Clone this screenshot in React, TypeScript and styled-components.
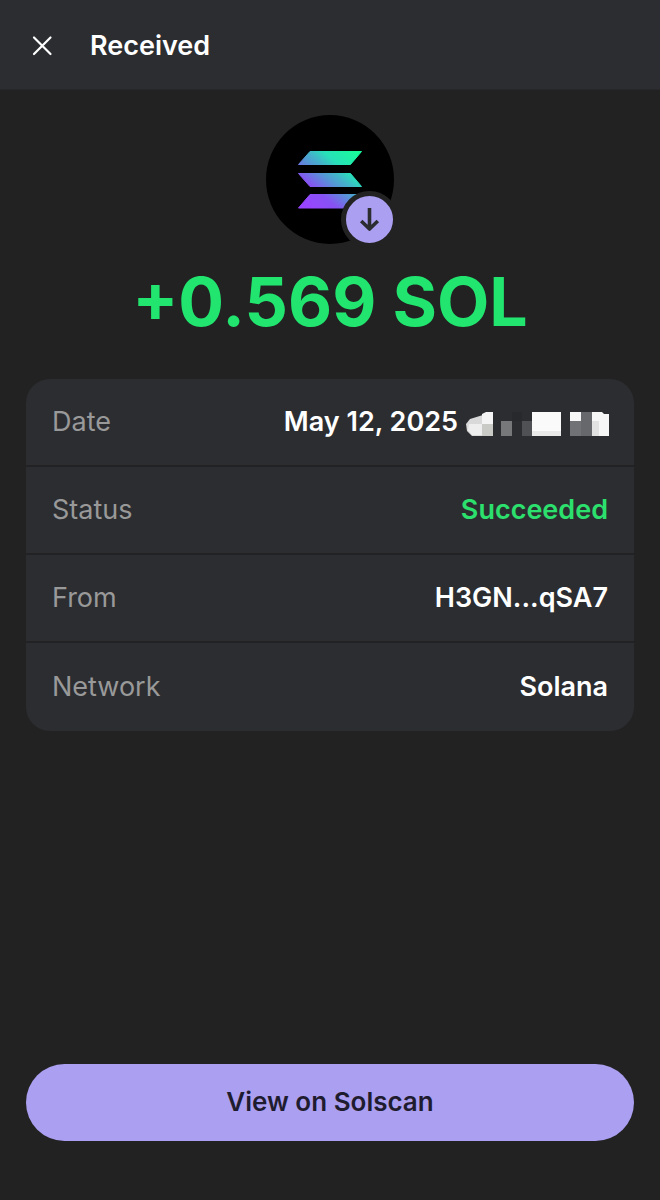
import React from "react";
import styled, { createGlobalStyle } from "styled-components";

const GlobalStyle = createGlobalStyle`
  *, *::before, *::after { box-sizing: border-box; }
  body {
    margin: 0;
    background: #222222;
    color: #ffffff;
    font-family: Inter, "Liberation Sans", sans-serif;
  }
`;

const Screen = styled.div`
  display: flex;
  flex-direction: column;
  min-height: 100vh;
`;

const Header = styled.header`
  display: flex;
  align-items: center;
  gap: 32px;
  padding: 29px 26px 26px;
  background: #2c2d31;
  border-bottom: 1px solid #28282b;
`;

const CloseButton = styled.button`
  display: flex;
  padding: 0;
  border: 0;
  background: none;
  color: #ffffff;
  cursor: pointer;
`;

const Title = styled.h1`
  margin: 0;
  font-size: 27px;
  line-height: 34px;
  font-weight: 600;
`;

const Main = styled.main`
  flex: 1;
  display: flex;
  flex-direction: column;
  align-items: center;
  padding: 25px 26px 59px;
`;

const TokenIcon = styled.div`
  position: relative;
  width: 128px;
  height: 129px;
`;

const Badge = styled.span`
  position: absolute;
  right: -4px;
  bottom: -4px;
  display: flex;
  border: 5px solid #222222;
  border-radius: 50%;
  background: #ab9ff2;
`;

const Amount = styled.p<{ $color: string }>`
  margin: 16px 0 36px;
  font-size: 68px;
  line-height: 83px;
  font-weight: 700;
  text-align: center;
  color: ${(p) => p.$color};
`;

const Details = styled.dl`
  width: 100%;
  margin: 0;
  border-radius: 24px;
  background: #2c2d31;
  overflow: hidden;
`;

const Row = styled.div`
  display: flex;
  align-items: center;
  justify-content: space-between;
  min-height: 88px;
  padding: 0 26px;
  font-size: 27px;
  line-height: 34px;

  &:not(:last-child) {
    border-bottom: 2px solid #222225;
  }
`;

const Label = styled.dt`
  color: #999999;
`;

const Value = styled.dd<{ $color?: string }>`
  display: flex;
  align-items: center;
  gap: 8px;
  margin: 0;
  font-weight: 600;
  color: ${(p) => p.$color ?? "#ffffff"};
`;

const ActionButton = styled.button`
  width: 100%;
  margin-top: auto;
  padding: 20px 26px 22px;
  border: 0;
  border-radius: 39px;
  background: #ab9ff2;
  color: #1f1c30;
  font-family: inherit;
  font-size: 26px;
  line-height: 35px;
  font-weight: 600;
  cursor: pointer;
`;

const MaskedBlock = styled.svg`
  display: block;
  overflow: visible;
`;

const CloseIcon = () => (
  <svg width="32" height="32" viewBox="0 0 32 32" fill="none" aria-hidden="true">
    <path d="M8 7.500L24.500 24M24.500 7.500L8 24" stroke="currentColor" strokeWidth="2.2" strokeLinecap="round" />
  </svg>
);

const SolanaLogo = () => (
  <svg width="128" height="129" viewBox="0 0 128 129" role="img" aria-label="Solana">
    <defs>
      <linearGradient id="sol" gradientUnits="userSpaceOnUse" x1="38" y1="97" x2="90" y2="34">
        <stop offset="0.08" stopColor="#9945ff" />
        <stop offset="0.3" stopColor="#8752f3" />
        <stop offset="0.5" stopColor="#5497d5" />
        <stop offset="0.6" stopColor="#43b4ca" />
        <stop offset="0.72" stopColor="#28e0b9" />
        <stop offset="0.97" stopColor="#19fb9b" />
      </linearGradient>
    </defs>
    <ellipse cx="64" cy="64.500" rx="64" ry="64.500" fill="#000000" />
    <g fill="url(#sol)" stroke="url(#sol)" strokeWidth="1" strokeLinejoin="round">
      <path d="M44 36.500H95.500L84.500 49.500H32.500Z" />
      <path d="M32.500 58.500H84.500L95.500 71.500H44Z" />
      <path d="M44 79.500H95.500L84.500 93H32.500Z" />
    </g>
  </svg>
);

const ArrowDownIcon = () => (
  <svg width="47" height="47" viewBox="0 0 47 47" fill="none" aria-hidden="true">
    <path d="M23.500 12V33M15.200 25L23.500 33L31.800 25" stroke="#2c2d31" strokeWidth="3.6" strokeLinejoin="round" />
  </svg>
);

const HiddenTime = () => (
  <MaskedBlock width="142" height="30" viewBox="0 -4 142 30" role="img" aria-label="Time hidden">
    <path d="M0 13L4 8L17 4V25H6L1 20Z" fill="#d9d9d9" />
    <path d="M3 13H16V24H6L2 19Z" fill="#eeeeee" />
    <path d="M16 3L20 1H27V14H16Z" fill="#f4f4f4" />
    <path d="M16 13H27V25H16Z" fill="#c9c9c6" />
    <rect x="35" y="10" width="11" height="15" fill="#77787a" />
    <rect x="46" y="1" width="10" height="9" fill="#28292d" />
    <rect x="56" y="10" width="10" height="15" fill="#505154" />
    <rect x="66" y="1" width="29" height="24" fill="#fafafa" />
    <rect x="66" y="20" width="29" height="5" fill="#e9e9e9" />
    <rect x="104" y="1" width="11" height="10" fill="#f7f7f7" />
    <rect x="104" y="10" width="11" height="15" fill="#717275" />
    <rect x="115" y="1" width="11" height="24" fill="#67686b" />
    <path d="M126 1H136L138 3H143V25H126Z" fill="#f6f6f6" />
    <rect x="126" y="10" width="7" height="15" fill="#e2e2e2" />
  </MaskedBlock>
);

const details: { label: string; value: string; color?: string; masked?: boolean }[] = [
  { label: "Date", value: "May 12, 2025", masked: true },
  { label: "Status", value: "Succeeded", color: "#2ce06e" },
  { label: "From", value: "H3GN...qSA7" },
  { label: "Network", value: "Solana" },
];

export default function App() {
  return (
    <>
      <GlobalStyle />
      <Screen>
        <Header>
          <CloseButton type="button" aria-label="Close">
            <CloseIcon />
          </CloseButton>
          <Title>Received</Title>
        </Header>
        <Main>
          <TokenIcon>
            <SolanaLogo />
            <Badge>
              <ArrowDownIcon />
            </Badge>
          </TokenIcon>
          <Amount $color="#21e56f">+0.569 SOL</Amount>
          <Details>
            {details.map((d) => (
              <Row key={d.label}>
                <Label>{d.label}</Label>
                <Value $color={d.color}>
                  {d.value}
                  {d.masked && <HiddenTime />}
                </Value>
              </Row>
            ))}
          </Details>
          <ActionButton type="button">View on Solscan</ActionButton>
        </Main>
      </Screen>
    </>
  );
}
